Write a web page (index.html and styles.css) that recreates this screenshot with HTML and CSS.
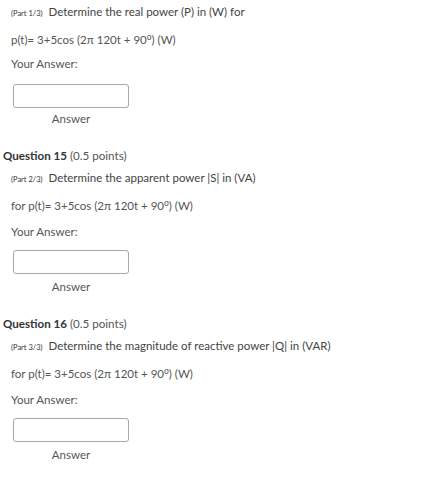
FILE: index.html
```html
<!DOCTYPE html>
<html>
<head>
<meta charset="utf-8">
<link rel="stylesheet" href="styles.css">
</head>
<body>
<div class="page">
  <section class="question first">
    <div class="part"><span class="part-label">(Part 1/3)</span> Determine the real power (P) in (W) for</div>
    <div class="formula">p(t)= 3+5cos (2π 120t + 90<sup>o</sup>) (W)</div>
    <div class="your">Your Answer:</div>
    <div class="answer-wrap">
      <input class="answer-box" type="text">
      <div class="answer-label">Answer</div>
    </div>
  </section>
  <section class="question">
    <div class="q-title"><b>Question 15</b> <span class="pts">(0.5 points)</span></div>
    <div class="part"><span class="part-label">(Part 2/3)</span> Determine the apparent power |S| in (VA)</div>
    <div class="formula">for p(t)= 3+5cos (2π 120t + 90<sup>o</sup>) (W)</div>
    <div class="your">Your Answer:</div>
    <div class="answer-wrap">
      <input class="answer-box" type="text">
      <div class="answer-label">Answer</div>
    </div>
  </section>
  <section class="question">
    <div class="q-title"><b>Question 16</b> <span class="pts">(0.5 points)</span></div>
    <div class="part"><span class="part-label">(Part 3/3)</span> Determine the magnitude of reactive power |Q| in (VAR)</div>
    <div class="formula">for p(t)= 3+5cos (2π 120t + 90<sup>o</sup>) (W)</div>
    <div class="your">Your Answer:</div>
    <div class="answer-wrap">
      <input class="answer-box" type="text">
      <div class="answer-label">Answer</div>
    </div>
  </section>
</div>
</body>
</html>
```
FILE: styles.css
```css
html, body {
  margin: 0;
  padding: 0;
  background: #ffffff;
}
body {
  font-family: Lato, "Liberation Sans", sans-serif;
  color: #555555;
  font-size: 11.5px;
}
.page {
  padding-left: 3px;
}
.question {
  height: 168px;
}
.question.first {
  height: 145px;
  padding-top: 1px;
  box-sizing: border-box;
}
.q-title {
  height: 22px;
  line-height: 22px;
  font-size: 11.6px;
  color: #333333;
}
.q-title b {
  font-weight: 700;
}
.pts {
  color: #555555;
}
.part {
  height: 22px;
  line-height: 22px;
  padding-left: 8px;
  color: #444444;
}
.part-label {
  font-size: 7.5px;
  color: #333333;
  margin-right: 3px;
}
.formula {
  margin-top: 6px;
  height: 22px;
  line-height: 22px;
  padding-left: 8px;
}
.your {
  margin-top: 4px;
  height: 22px;
  line-height: 22px;
  padding-left: 8px;
}
.first .your {
  margin-top: 2px;
}
.answer-wrap {
  margin-top: 7px;
  margin-left: 10px;
  width: 116px;
}
.first .answer-wrap {
  margin-top: 9px;
}
.answer-box {
  display: block;
  box-sizing: border-box;
  width: 116px;
  height: 24px;
  margin: 0;
  border: 1px solid #a8a8a8;
  border-radius: 3px;
  background: #fff;
}
.answer-label {
  text-align: center;
  margin-top: 6px;
  line-height: 14px;
}
.first .answer-label {
  margin-top: 4px;
}
sup {
  font-size: 8.5px;
  vertical-align: 4px;
  line-height: 0;
}
```
